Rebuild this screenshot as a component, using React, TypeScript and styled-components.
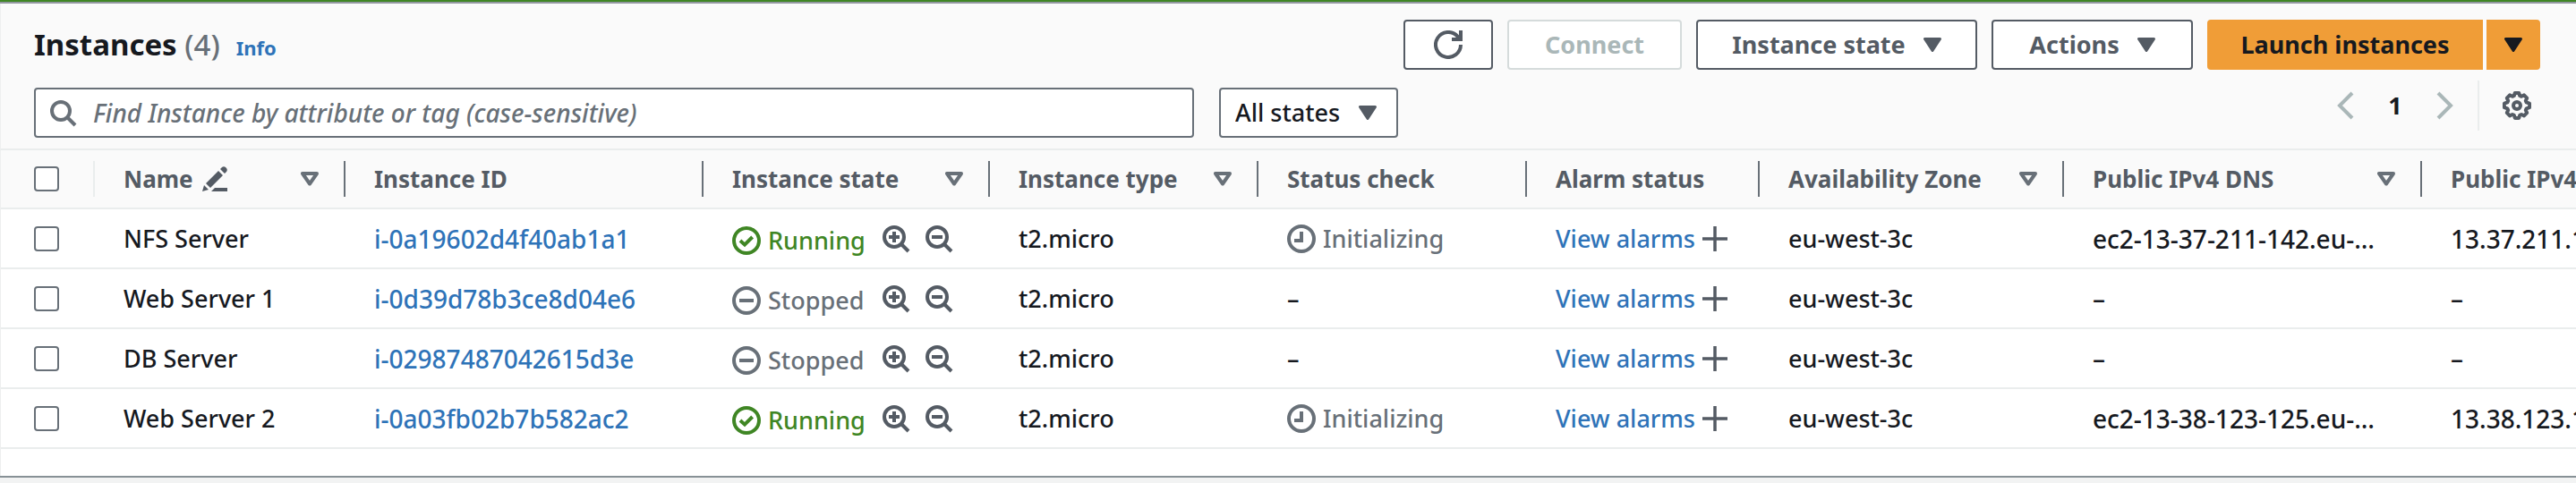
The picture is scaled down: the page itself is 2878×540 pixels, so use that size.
import React from "react";
import styled, { createGlobalStyle, css } from "styled-components";

const font = `"Noto Sans", "Open Sans", sans-serif`;
const c = {
  text: "#16191f",
  heading: "#545b64",
  muted: "#687078",
  disabled: "#aab7b8",
  link: "#2e73b8",
  line: "#eaeded",
  green: "#3f8624",
  orange: "#f09d37",
  subtle: "#fafafa",
};

const GlobalStyle = createGlobalStyle`
  * { box-sizing: border-box; }
  body { margin: 0; background: #f2f3f3; color: ${c.text}; font: 500 27px/40px ${font}; overflow-x: hidden; }
  button, input, select { font: inherit; color: inherit; margin: 0; }
  svg { display: block; flex: none; }
`;

const Flash = styled.div`
  height: 2px;
  background: ${c.green};
`;
const Panel = styled.main`
  background: #fff;
  border-top: 2px solid #9298a0;
  border-bottom: 2px solid #879196;
  box-shadow: 0 1px 0 #d3d7d8;
`;
const Top = styled.header`
  background: ${c.subtle};
  padding: 18px 40px 12px 37px;
  border-left: 1px solid #eeefef;
  border-bottom: 2px solid ${c.line};
`;
const Row = styled.div<{ $gap?: number }>`
  display: flex;
  align-items: center;
  gap: ${(p) => p.$gap ?? 0}px;
`;
const TitleRow = styled(Row)`
  justify-content: space-between;
`;
const TitleGroup = styled.div`
  display: flex;
  align-items: baseline;
`;
const Title = styled.h1`
  margin: 0;
  font-size: 33px;
  line-height: 48px;
  font-weight: 700;
`;
const Count = styled.span`
  font-weight: 500;
  color: ${c.muted};
`;
const InfoLink = styled.a`
  margin-left: 18px;
  font-size: 22px;
  font-weight: 700;
  color: ${c.link};
  text-decoration: none;
`;
const Button = styled.button<{ $primary?: boolean; $width: number }>`
  display: flex;
  align-items: center;
  justify-content: center;
  gap: 20px;
  height: 56px;
  min-width: ${(p) => p.$width}px;
  padding: 0;
  border: 2px solid ${c.heading};
  border-radius: 4px;
  background: #fff;
  color: ${c.heading};
  font-weight: 700;
  white-space: nowrap;
  &:disabled {
    border-color: #d5dbdb;
    color: ${c.disabled};
  }
  ${(p) =>
    p.$primary &&
    css`
      border-color: ${c.orange};
      background: ${c.orange};
      color: ${c.text};
    `}
`;
const SplitButton = styled(Row)`
  ${Button}:first-child { border-radius: 4px 0 0 4px; }
  ${Button}:last-child { border-radius: 0 4px 4px 0; }
`;
const ToolRow = styled(Row)`
  margin-top: 20px;
  justify-content: space-between;
`;
const Filters = styled(Row)`
  flex: 1;
`;
const Search = styled.label`
  display: flex;
  align-items: center;
  gap: 18px;
  flex: 1;
  max-width: 1296px;
  height: 56px;
  padding: 0 16px 0 14px;
  border: 2px solid ${c.muted};
  border-radius: 4px;
  background: #fff;
  color: ${c.muted};
`;
const SearchInput = styled.input`
  flex: 1;
  min-width: 0;
  border: 0;
  padding: 0;
  outline: 0;
  background: none;
  font-size: 28px;
  &::placeholder { color: ${c.muted}; font-style: italic; opacity: 1; }
`;
const SelectBox = styled.div`
  display: grid;
  align-items: center;
  width: 200px;
  height: 56px;
  border: 2px solid ${c.muted};
  border-radius: 4px;
  background: #fff;
  > * { grid-area: 1 / 1; }
  > svg { justify-self: end; margin-right: 22px; color: ${c.heading}; pointer-events: none; }
`;
const Select = styled.select`
  appearance: none;
  width: 100%;
  height: 52px;
  padding: 0 44px 0 16px;
  border: 0;
  outline: 0;
  background: none;
`;
const Pager = styled(Row)`
  align-self: flex-start;
  margin-top: -8px;
`;
const IconButton = styled.button<{ $tone?: string }>`
  display: flex;
  padding: 0;
  border: 0;
  background: none;
  color: ${(p) => p.$tone ?? c.heading};
`;
const PageNumber = styled.button`
  width: 80px;
  padding: 0;
  border: 0;
  background: none;
  font-weight: 700;
`;
const Preferences = styled.div`
  display: flex;
  align-items: center;
  height: 56px;
  margin-left: 20px;
  padding: 0 10px 0 26px;
  border-left: 2px solid ${c.line};
`;

const TableWrap = styled.div`
  overflow: hidden;
  padding-bottom: 30px;
  border-left: 1px solid #eeefef;
`;
const Table = styled.table`
  width: 2977px;
  table-layout: fixed;
  border-collapse: separate;
  border-spacing: 0;
`;
const Th = styled.th`
  height: 66px;
  padding: 0;
  background: ${c.subtle};
  border-bottom: 2px solid ${c.line};
  color: ${c.heading};
  text-align: left;
  font-size: 26px;
  font-weight: 700;
`;
const ThInner = styled.div<{ $light?: boolean; $check?: boolean }>`
  display: flex;
  align-items: center;
  justify-content: space-between;
  height: 40px;
  padding: 0 28px 0 ${(p) => (p.$check ? 37 : 32)}px;
  border-right: 2px solid ${(p) => (p.$light ? c.line : c.muted)};
  white-space: nowrap;
`;
const Td = styled.td<{ $check?: boolean }>`
  height: 67px;
  padding: 0 0 0 ${(p) => (p.$check ? 37 : 32)}px;
  border-bottom: 2px solid ${c.line};
  white-space: nowrap;
`;
const DataTd = styled(Td)`
  font-size: 28px;
`;
const Check = styled.input`
  appearance: none;
  display: block;
  width: 28px;
  height: 28px;
  border: 2px solid ${c.muted};
  border-radius: 4px;
  background: #fff;
`;
const Link = styled.a`
  color: ${c.link};
  text-decoration: none;
`;
const Status = styled.span<{ $tone: string }>`
  display: flex;
  align-items: center;
  gap: 8px;
  color: ${(p) => p.$tone};
`;
const StateCell = styled(Row)`
  ${Status} { width: 151px; padding-top: 4px; }
`;

type IconProps = { size?: number };
const Svg = ({ size = 32, children }: IconProps & { children: React.ReactNode }) => (
  <svg width={size} height={size} viewBox="0 0 16 16" fill="none" stroke="currentColor" strokeWidth="2" aria-hidden="true">
    {children}
  </svg>
);
const Caret = () => (
  <svg width="20" height="16" viewBox="0 0 20 16" aria-hidden="true">
    <path d="M1.5 1.5h17L10 14.5z" fill="currentColor" stroke="currentColor" strokeWidth="3" strokeLinejoin="round" />
  </svg>
);
const SortIcon = () => (
  <svg width="20" height="16" viewBox="0 0 20 16" aria-hidden="true">
    <path d="M2 2h16L10 13.5z" fill="none" stroke={c.muted} strokeWidth="4" strokeLinejoin="round" />
  </svg>
);
const Refresh = () => (
  <Svg>
    <path d="M15 8a7 7 0 1 1-1.8-4.7L14 5" />
    <path d="M15 0v5h-5" />
  </Svg>
);
const SearchIcon = () => (
  <Svg>
    <circle cx="7" cy="7" r="5" />
    <path d="m10.5 10.500 4.500 4.500" />
  </Svg>
);
const Zoom = ({ plus }: { plus?: boolean }) => (
  <Svg>
    <circle cx="7" cy="7" r="5.500" />
    <path d="m11 11 4 4M4 7h6" />
    {plus && <path d="M7 4v6" />}
  </Svg>
);
const CheckCircle = () => (
  <Svg>
    <circle cx="8" cy="8" r="7" />
    <path d="m4.500 8 2.500 2.300L11.300 6" />
  </Svg>
);
const StopCircle = () => (
  <Svg>
    <circle cx="8" cy="8" r="7" />
    <path d="M4 8h8" />
  </Svg>
);
const Clock = () => (
  <Svg>
    <circle cx="8" cy="8" r="7" />
    <path d="M8 4v5H4" />
  </Svg>
);
const Plus = () => (
  <Svg size={28}>
    <path d="M8 0v16M0 8h16" />
  </Svg>
);
const Chevron = ({ right }: { right?: boolean }) => (
  <Svg>
    <path d={right ? "m4 1 7 7-7 7" : "m12 1-7 7 7 7"} />
  </Svg>
);
const Gear = () => (
  <Svg>
    <path
      strokeLinejoin="round"
      d="M6.900 1h2.200l.5 1.500.9.400 1.500-.7 1.600 1.600-.7 1.500.4.900 1.700.6v2.300l-1.700.6-.4.900.7 1.500-1.600 1.600-1.500-.7-.9.400L9.100 15H6.900l-.5-1.600-.9-.4-1.500.7-1.600-1.600.7-1.500-.4-.9L1 9.100V6.800l1.700-.6.4-.9-.7-1.500L4 2.200l1.500.7.900-.4z"
    />
    <circle cx="8" cy="8" r="2" />
  </Svg>
);
const Pencil = () => (
  <svg width="28" height="28" viewBox="0 0 28 28" fill="currentColor" aria-hidden="true">
    <path d="M10 28l4-4h14v4zM0 28l2-7 5 5zM4 19 18 5l5 5L9 24zM20 3l2-2c1-1 3-1 4 0l1 1c1 1 1 3 0 4l-2 2z" />
  </svg>
);

const columns: { label: string; width: number; sort?: boolean; edit?: boolean }[] = [
  { label: "Name", width: 280, sort: true, edit: true },
  { label: "Instance ID", width: 400 },
  { label: "Instance state", width: 320, sort: true },
  { label: "Instance type", width: 300, sort: true },
  { label: "Status check", width: 300 },
  { label: "Alarm status", width: 260 },
  { label: "Availability Zone", width: 340, sort: true },
  { label: "Public IPv4 DNS", width: 400, sort: true },
  { label: "Public IPv4 ...", width: 272 },
];

const rows = [
  { name: "NFS Server", id: "i-0a19602d4f40ab1a1", running: true, dns: "ec2-13-37-211-142.eu-…", ip: "13.37.211.142" },
  { name: "Web Server 1", id: "i-0d39d78b3ce8d04e6", running: false, dns: "–", ip: "–" },
  { name: "DB Server", id: "i-02987487042615d3e", running: false, dns: "–", ip: "–" },
  { name: "Web Server 2", id: "i-0a03fb02b7b582ac2", running: true, dns: "ec2-13-38-123-125.eu-…", ip: "13.38.123.125" },
];

export default function App() {
  return (
    <>
      <GlobalStyle />
      <Flash />
      <Panel>
        <Top>
          <TitleRow>
            <TitleGroup>
              <Title>
                Instances <Count>(4)</Count>
              </Title>
              <InfoLink href="#info">Info</InfoLink>
            </TitleGroup>
            <Row $gap={16}>
              <Button $width={100} aria-label="Refresh"><Refresh /></Button>
              <Button $width={195} disabled>Connect</Button>
              <Button $width={314}>Instance state <Caret /></Button>
              <Button $width={225}>Actions <Caret /></Button>
              <SplitButton $gap={4}>
                <Button $primary $width={308}>Launch instances</Button>
                <Button $primary $width={60} aria-label="More launch options"><Caret /></Button>
              </SplitButton>
            </Row>
          </TitleRow>
          <ToolRow>
            <Filters $gap={28}>
              <Search>
                <SearchIcon />
                <SearchInput aria-label="Find instances" placeholder="Find Instance by attribute or tag (case-sensitive)" />
              </Search>
              <SelectBox>
                <Select aria-label="State filter">
                  <option>All states</option>
                </Select>
                <Caret />
              </SelectBox>
            </Filters>
            <Pager>
              <IconButton $tone={c.disabled} aria-label="Previous page"><Chevron /></IconButton>
              <PageNumber>1</PageNumber>
              <IconButton $tone={c.disabled} aria-label="Next page"><Chevron right /></IconButton>
              <Preferences>
                <IconButton aria-label="Preferences"><Gear /></IconButton>
              </Preferences>
            </Pager>
          </ToolRow>
        </Top>
        <TableWrap>
          <Table>
            <colgroup>
              <col style={{ width: 105 }} />
              {columns.map((col) => (
                <col key={col.label} style={{ width: col.width }} />
              ))}
            </colgroup>
            <thead>
              <tr>
                <Th scope="col">
                  <ThInner $light $check>
                    <Check type="checkbox" aria-label="Select all instances" />
                  </ThInner>
                </Th>
                {columns.map((col) => (
                  <Th scope="col" key={col.label}>
                    <ThInner>
                      <Row $gap={10}>
                        {col.label}
                        {col.edit && <Pencil />}
                      </Row>
                      {col.sort && <SortIcon />}
                    </ThInner>
                  </Th>
                ))}
              </tr>
            </thead>
            <tbody>
              {rows.map((r) => (
                <tr key={r.id}>
                  <Td $check><Check type="checkbox" aria-label={`Select ${r.name}`} /></Td>
                  <Td>{r.name}</Td>
                  <DataTd><Link href={`#${r.id}`}>{r.id}</Link></DataTd>
                  <Td>
                    <StateCell $gap={16}>
                      <Status $tone={r.running ? c.green : c.muted}>
                        {r.running ? <CheckCircle /> : <StopCircle />}
                        {r.running ? "Running" : "Stopped"}
                      </Status>
                      <IconButton aria-label="Include this state"><Zoom plus /></IconButton>
                      <IconButton aria-label="Exclude this state"><Zoom /></IconButton>
                    </StateCell>
                  </Td>
                  <Td>t2.micro</Td>
                  <Td>{r.running ? <Status $tone={c.muted}><Clock />Initializing</Status> : "–"}</Td>
                  <Td>
                    <Row $gap={8}>
                      <Link href="#alarms">View alarms</Link>
                      <IconButton aria-label="Create alarm"><Plus /></IconButton>
                    </Row>
                  </Td>
                  <Td>eu-west-3c</Td>
                  <DataTd>{r.dns}</DataTd>
                  <DataTd>{r.ip}</DataTd>
                </tr>
              ))}
            </tbody>
          </Table>
        </TableWrap>
      </Panel>
    </>
  );
}
